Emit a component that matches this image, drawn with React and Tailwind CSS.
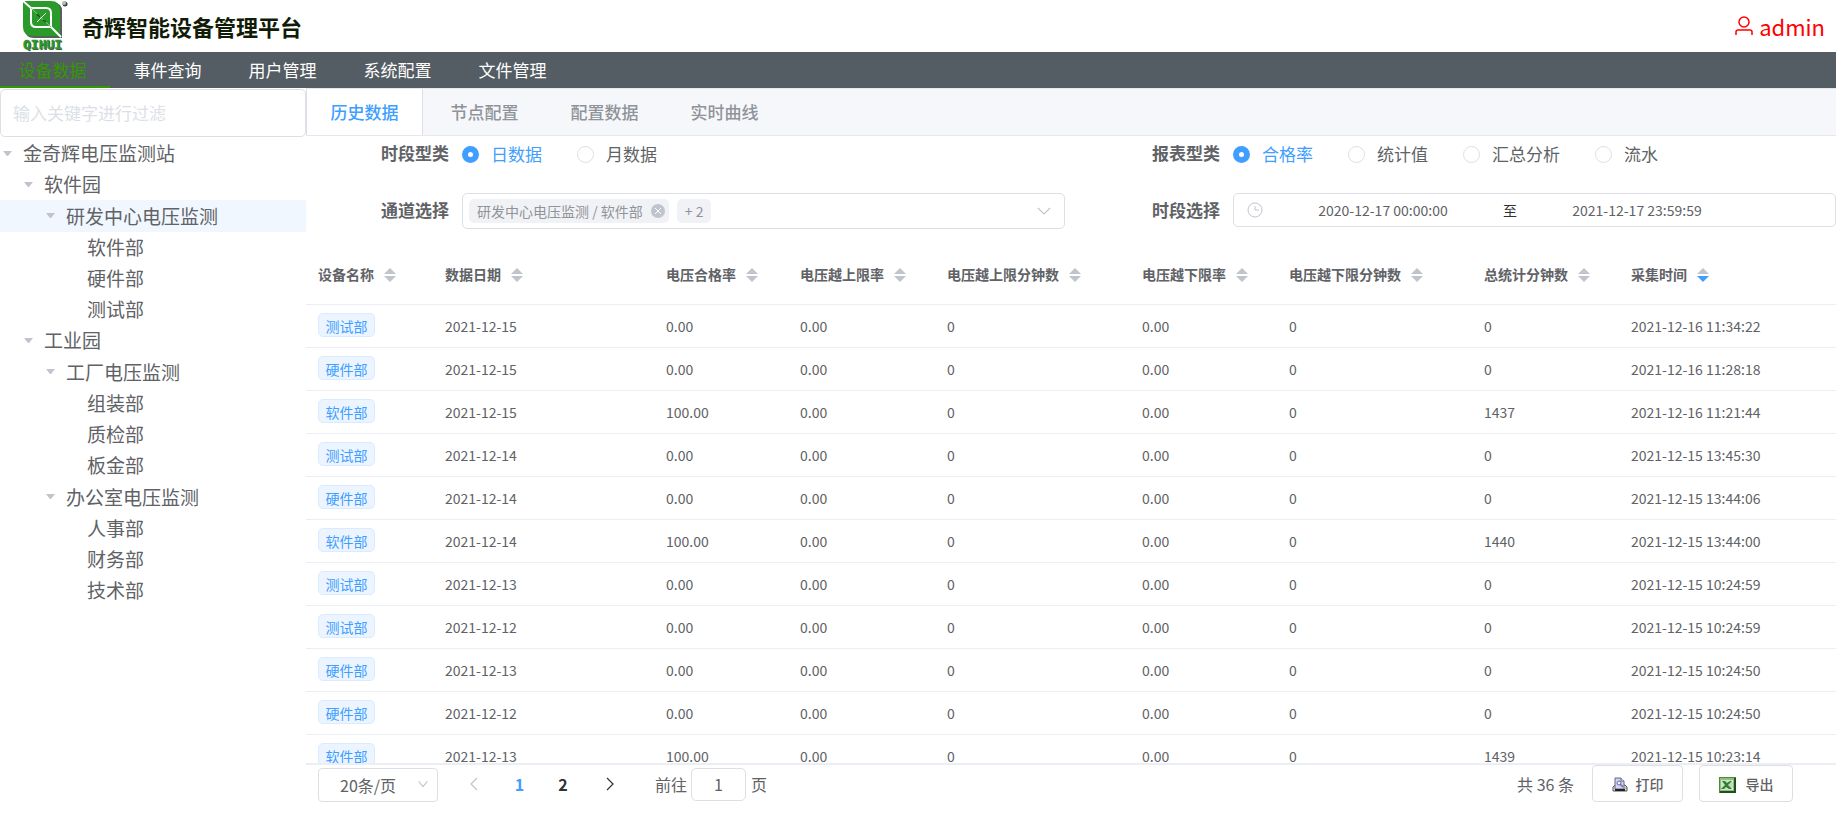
import React, { useState } from 'react';

const treeData = [
  { label: '金奇辉电压监测站', level: 0, open: true },
  { label: '软件园', level: 1, open: true },
  { label: '研发中心电压监测', level: 2, open: true },
  { label: '软件部', level: 3 },
  { label: '硬件部', level: 3 },
  { label: '测试部', level: 3 },
  { label: '工业园', level: 1, open: true },
  { label: '工厂电压监测', level: 2, open: true },
  { label: '组装部', level: 3 },
  { label: '质检部', level: 3 },
  { label: '板金部', level: 3 },
  { label: '办公室电压监测', level: 2, open: true },
  { label: '人事部', level: 3 },
  { label: '财务部', level: 3 },
  { label: '技术部', level: 3 },
];

const levelClass = ['h-[31px] pl-0', 'h-[31px] pl-[21px]', 'h-8 pl-[43px]', 'h-[31px] pl-[64px]'];

const columns = [
  { title: '设备名称', width: 'w-[127px]' },
  { title: '数据日期', width: 'w-[221px]' },
  { title: '电压合格率', width: 'w-[134px]' },
  { title: '电压越上限率', width: 'w-[147px]' },
  { title: '电压越上限分钟数', width: 'w-[195px]' },
  { title: '电压越下限率', width: 'w-[147px]' },
  { title: '电压越下限分钟数', width: 'w-[195px]' },
  { title: '总统计分钟数', width: 'w-[147px]' },
  { title: '采集时间', width: 'w-[217px]', sorted: true },
];

const rows = [
  ['测试部', '2021-12-15', '0.00', '0.00', '0', '0.00', '0', '0', '2021-12-16 11:34:22'],
  ['硬件部', '2021-12-15', '0.00', '0.00', '0', '0.00', '0', '0', '2021-12-16 11:28:18'],
  ['软件部', '2021-12-15', '100.00', '0.00', '0', '0.00', '0', '1437', '2021-12-16 11:21:44'],
  ['测试部', '2021-12-14', '0.00', '0.00', '0', '0.00', '0', '0', '2021-12-15 13:45:30'],
  ['硬件部', '2021-12-14', '0.00', '0.00', '0', '0.00', '0', '0', '2021-12-15 13:44:06'],
  ['软件部', '2021-12-14', '100.00', '0.00', '0', '0.00', '0', '1440', '2021-12-15 13:44:00'],
  ['测试部', '2021-12-13', '0.00', '0.00', '0', '0.00', '0', '0', '2021-12-15 10:24:59'],
  ['测试部', '2021-12-12', '0.00', '0.00', '0', '0.00', '0', '0', '2021-12-15 10:24:59'],
  ['硬件部', '2021-12-13', '0.00', '0.00', '0', '0.00', '0', '0', '2021-12-15 10:24:50'],
  ['硬件部', '2021-12-12', '0.00', '0.00', '0', '0.00', '0', '0', '2021-12-15 10:24:50'],
  ['软件部', '2021-12-13', '100.00', '0.00', '0', '0.00', '0', '1439', '2021-12-15 10:23:14'],
];

const Logo = () => (
  <svg width="48" height="52" viewBox="0 0 48 52" aria-hidden="true">
    <path d="M3 3H31Q39 3 39 11V38H11Q2 38 2 29Z" fill="#55605a" />
    <path d="M0 1H28Q37 1 37 10V36H10Q0 36 0 27Z" fill="#2a9a2a" />
    <path d="M8 8H23Q28 8 28 13V27H13Q8 27 8 22Z" fill="none" stroke="#fff" strokeWidth="2" />
    <path d="M0 1L8 8M28 27L38 37" stroke="#fff" strokeWidth="2" />
    <path d="M8 8L28 27" stroke="#8fcb8f" strokeWidth="1" />
    <path d="M14 22L23 13" stroke="#e6f5e6" strokeWidth="1" />
    <path d="M14 14L17 17M20 20L23 22" stroke="#174f17" strokeWidth="1.5" />
    <circle cx="42" cy="4" r="2.5" fill="#444" />
    <circle cx="41" cy="3" r="2" fill="#a9c9a9" />
    <text x="1" y="50" fontSize="13" fontWeight="700" fontFamily="DejaVu Sans Mono, monospace" fill="#4a4a4a">QIHUI</text>
    <text x="0" y="49" fontSize="13" fontWeight="700" fontFamily="DejaVu Sans Mono, monospace" fill="#2a9a2a" stroke="#2a9a2a" strokeWidth="0.5">QIHUI</text>
  </svg>
);

const Chevron = ({ d, size = 16, className }) => (
  <svg width={size} height={size} viewBox="0 0 16 16" fill="none" stroke="currentColor" strokeWidth="1.2" className={className} aria-hidden="true">
    <path d={d} />
  </svg>
);

const SortIcon = ({ sorted }) => (
  <svg width="12" height="14" viewBox="0 0 12 14" aria-hidden="true">
    <path d="M6 0L12 6H0Z" fill="#c0c4cc" />
    <path d="M0 8H12L6 14Z" fill={sorted ? '#409eff' : '#c0c4cc'} />
  </svg>
);

const PrintIcon = () => (
  <svg width="16" height="16" viewBox="0 0 16 16" aria-hidden="true">
    <path d="M3 8L1 10V14H15V10L13 8Z" fill="#e4e4e4" stroke="#555" />
    <path d="M3 1H9L12 4V12H3Z" fill="#d3d3f4" stroke="#66667e" />
    <path d="M9 1V4H12" fill="#fff" stroke="#66667e" />
    <circle cx="7" cy="6" r="2" fill="#eef" stroke="#6b6ba8" />
    <path d="M8 7L11 10" stroke="#6b6ba8" strokeWidth="1.5" />
    <path d="M3 13H13" stroke="#222" strokeWidth="2" />
    <path d="M13 11H15" stroke="#4caf50" />
  </svg>
);

const ExcelIcon = () => (
  <svg width="17" height="16" viewBox="0 0 17 16" aria-hidden="true">
    <rect width="17" height="16" fill="#4c8a3f" />
    <path d="M16 1V15H1" fill="none" stroke="#1f4f1f" strokeWidth="2" />
    <rect x="1" y="1" width="14" height="13" fill="#8fbf80" />
    <rect x="2" y="3" width="12" height="10" fill="#cfe3c8" />
    <path d="M10 4H14V12H10Z" fill="#f4faf2" />
    <path d="M10 6H14M10 8H14M10 10H14" stroke="#8fbf80" />
    <path d="M3 4H6L8 6L11 4H13L9 8L13 12H10L7 10L5 12H2L6 8Z" fill="#2f7f2f" />
  </svg>
);

const RadioGroup = ({ name, options }) => {
  const [value, setValue] = useState(options[0]);
  return (
    <div className="flex items-center gap-[35px]">
      {options.map((o) => (
        <label key={o} className={`flex items-center gap-3 whitespace-nowrap ${value === o ? 'text-[#409eff]' : ''}`}>
          <input
            type="radio"
            name={name}
            checked={value === o}
            onChange={() => setValue(o)}
            className="h-[17px] w-[17px] shrink-0 appearance-none rounded-full border border-[#dcdfe6] bg-white checked:border-[6px] checked:border-[#409eff]"
          />
          {o}
        </label>
      ))}
    </div>
  );
};

const FormItem = ({ label, children }) => (
  <div className="flex h-9 items-start">
    <span className="w-[156px] shrink-0 pr-[13px] text-right leading-[34px] font-bold">{label}</span>
    {children}
  </div>
);

const App = () => {
  const [tab, setTab] = useState('历史数据');

  return (
    <div className="flex h-screen flex-col overflow-hidden bg-white font-['Noto_Sans_CJK_SC',sans-serif] text-[17px] text-[#606266]">
      {/* Header */}
      <header className="flex h-13 shrink-0 items-center pr-[11px] pl-[23px]">
        <Logo />
        <h1 className="ml-[11px] flex-1 text-[22px] font-bold text-[#101c08]">奇辉智能设备管理平台</h1>
        <a href="#" className="flex items-center gap-[6px] text-[22px] text-[#ff0000]">
          <svg width="18" height="20" viewBox="0 0 18 20" fill="none" stroke="currentColor" strokeWidth="1.5" aria-hidden="true">
            <circle cx="9" cy="6" r="5" />
            <path d="M1 19V16Q1 14 3 14H15Q17 14 17 16V19" />
          </svg>
          admin
        </a>
      </header>

      {/* Main menu */}
      <nav className="flex h-9 shrink-0 bg-[#545c64] text-white">
        {['设备数据', '事件查询', '用户管理', '系统配置', '文件管理'].map((m, i) => (
          <a
            key={m}
            href="#"
            className={`flex w-[115px] items-center justify-center border-b-2 pt-0.5 first:-ml-[5px] ${i === 0 ? 'border-[#339900] text-[#339900]' : 'border-transparent'}`}
          >
            {m}
          </a>
        ))}
      </nav>

      <div className="flex min-h-0 flex-1">
        {/* Device tree */}
        <aside className="w-[306px] shrink-0 pt-px">
          <input
            type="text"
            aria-label="过滤"
            placeholder="输入关键字进行过滤"
            className="h-12 w-full rounded-[5px] border border-[#dcdfe6] px-3 pb-0.5 placeholder:text-[#dcdfe6] focus:outline-none"
          />
          <ul className="pt-px text-[19px]">
            {treeData.map((n) => (
              <li key={n.label} className={n.label === '研发中心电压监测' ? 'bg-[#f0f7ff]' : ''}>
                <button type="button" className={`flex w-full items-center text-left ${levelClass[n.level]}`}>
                  <span className="flex w-[23px] shrink-0 pl-[3px]">
                    {n.open && (
                      <svg width="9" height="6" viewBox="0 0 9 6" aria-hidden="true">
                        <path d="M0 0H9L5 5H4Z" fill="#c0c4cc" />
                      </svg>
                    )}
                  </span>
                  {n.label}
                </button>
              </li>
            ))}
          </ul>
        </aside>

        <main className="flex min-w-0 flex-1 flex-col">
          {/* Tabs */}
          <div className="flex h-12 shrink-0 gap-[3px] border-y border-[#e4e7ed] bg-[#f5f7fa]">
            {['历史数据', '节点配置', '配置数据', '实时曲线'].map((t) => (
              <button
                key={t}
                type="button"
                onClick={() => setTab(t)}
                className={`w-[117px] border-x font-medium ${tab === t ? 'border-[#dcdfe6] bg-white text-[#409eff]' : 'border-transparent text-[#909399]'}`}
              >
                {t}
              </button>
            ))}
          </div>

          {/* Filters */}
          <div className="grid shrink-0 grid-cols-2 gap-x-3 gap-y-[21px] pb-[18px]">
            <FormItem label="时段型类">
              <div className="flex h-9 items-center">
                <RadioGroup name="period" options={['日数据', '月数据']} />
              </div>
            </FormItem>
            <FormItem label="报表型类">
              <div className="flex h-9 items-center">
                <RadioGroup name="report" options={['合格率', '统计值', '汇总分析', '流水']} />
              </div>
            </FormItem>
            <FormItem label="通道选择">
              <div className="flex h-9 flex-1 items-center gap-2 rounded-[5px] border border-[#dcdfe6] px-[6px] text-[14px] text-[#909399]">
                <span className="flex h-6 items-center gap-2 rounded-[5px] bg-[#f0f2f5] pr-1 pl-2">
                  研发中心电压监测 / 软件部
                  <button type="button" aria-label="移除">
                    <svg width="14" height="14" viewBox="0 0 14 14" aria-hidden="true">
                      <circle cx="7" cy="7" r="7" fill="#c0c4cc" />
                      <path d="M4 4L10 10M10 4L4 10" stroke="#fff" />
                    </svg>
                  </button>
                </span>
                <span className="flex h-6 items-center rounded-[5px] bg-[#f0f2f5] px-2">+ 2</span>
                <Chevron d="M2 5L8 11L14 5" className="mr-[6px] ml-auto text-[#c0c4cc]" />
              </div>
            </FormItem>
            <FormItem label="时段选择">
              <div className="flex h-[34px] min-w-0 flex-1 items-center rounded-[5px] border border-[#dcdfe6] pl-[13px] text-[14px]">
                <svg width="16" height="16" viewBox="0 0 16 16" fill="none" stroke="#c0c4cc" aria-hidden="true">
                  <circle cx="8" cy="8" r="7" />
                  <path d="M8 4V8H12" />
                </svg>
                <input type="text" aria-label="开始时间" defaultValue="2020-12-17 00:00:00" className="w-[240px] min-w-0 text-center focus:outline-none" />
                <span className="text-[#303133]">至</span>
                <input type="text" aria-label="结束时间" defaultValue="2021-12-17 23:59:59" className="w-[240px] min-w-0 text-center focus:outline-none" />
              </div>
            </FormItem>
          </div>

          {/* Data table */}
          <div className="min-h-0 flex-1 overflow-hidden border-b-2 border-[#ebeef5]">
            <table className="w-full table-fixed border-separate border-spacing-0 text-left text-[14px]">
              <thead>
                <tr>
                  {columns.map((c) => (
                    <th key={c.title} className={`h-[58px] border-b border-[#ebeef5] px-3 pb-0.5 font-bold ${c.width}`}>
                      <span className="flex items-center gap-[10px] whitespace-nowrap">
                        {c.title}
                        <SortIcon sorted={c.sorted} />
                      </span>
                    </th>
                  ))}
                </tr>
              </thead>
              <tbody>
                {rows.map((row, i) => (
                  <tr key={i}>
                    {row.map((cell, j) => (
                      <td key={j} className="h-[43px] border-b border-[#ebeef5] px-3 whitespace-nowrap">
                        {j === 0 ? (
                          <span className="mb-0.5 flex h-6 w-[57px] items-center justify-center rounded-[5px] border border-[#d9ecff] bg-[#ecf5ff] pt-0.5 text-[#409eff]">
                            {cell}
                          </span>
                        ) : (
                          cell
                        )}
                      </td>
                    ))}
                  </tr>
                ))}
              </tbody>
            </table>
          </div>

          {/* Pagination */}
          <footer className="flex h-16 shrink-0 items-start pr-[43px] pl-3 text-[16px]">
            <div className="relative mt-[3px]">
              <select aria-label="每页条数" className="h-[34px] w-[120px] appearance-none rounded-[4px] border border-[#dcdfe6] pl-[21px] focus:outline-none">
                <option>20条/页</option>
                <option>50条/页</option>
              </select>
              <Chevron d="M3 5L8 11L13 5" size={14} className="pointer-events-none absolute top-[9px] right-2 text-[#c0c4cc]" />
            </div>
            <div className="mt-0.5 ml-[14px] flex h-[34px] items-center font-bold text-[#303133]">
              <button type="button" aria-label="上一页" className="flex w-11 justify-center text-[#c0c4cc]">
                <Chevron d="M11 2L5 8L11 14" />
              </button>
              <button type="button" className="w-[47px] text-[#409eff]">1</button>
              <button type="button" className="w-10">2</button>
              <button type="button" aria-label="下一页" className="flex w-[53px] justify-center">
                <Chevron d="M5 2L11 8L5 14" />
              </button>
            </div>
            <label className="mt-0.5 ml-[19px] flex h-[34px] items-center gap-1">
              前往
              <input type="text" defaultValue="1" className="h-[33px] w-[55px] rounded-[5px] border border-[#dcdfe6] text-center focus:outline-none" />
              <span className="ml-px">页</span>
            </label>
            <span className="mt-0.5 ml-auto flex h-[34px] items-center">共 36 条</span>
            <button type="button" className="ml-[18px] flex h-[37px] w-[91px] items-center justify-center gap-2 rounded-[4px] border border-[#dcdfe6] pt-0.5 text-[14px] font-medium">
              <PrintIcon />
              打印
            </button>
            <button type="button" className="ml-4 flex h-[37px] w-[94px] items-center justify-center gap-[10px] rounded-[4px] border border-[#dcdfe6] pt-0.5 text-[14px] font-medium">
              <ExcelIcon />
              导出
            </button>
          </footer>
        </main>
      </div>
    </div>
  );
};

export default App;
